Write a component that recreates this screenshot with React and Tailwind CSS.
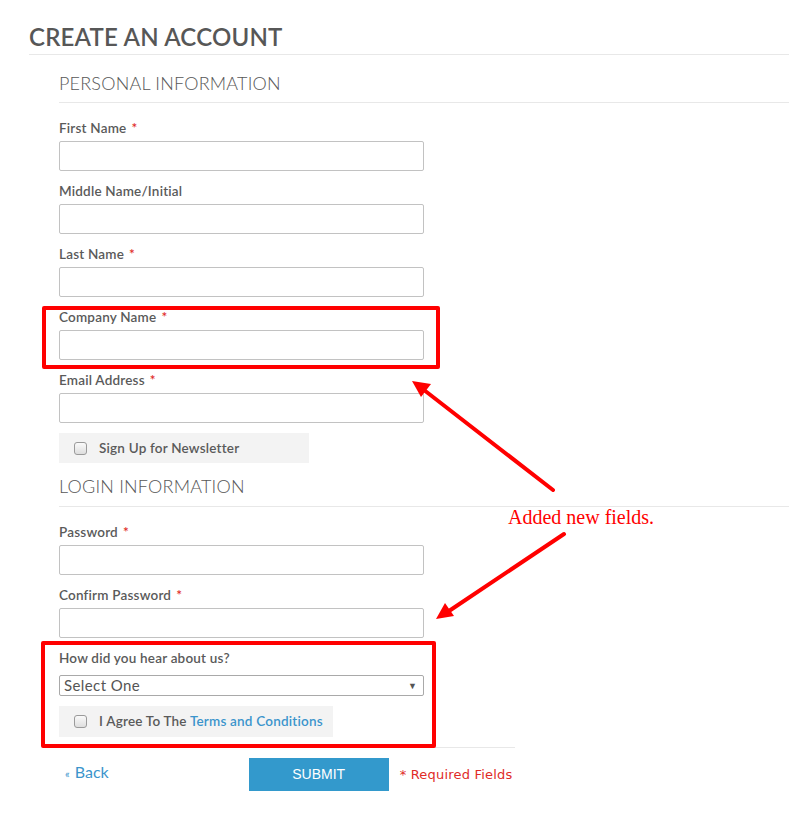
import { Fragment } from 'react'

const personal = [
  { label: 'First Name', required: true },
  { label: 'Middle Name/Initial' },
  { label: 'Last Name', required: true },
  { label: 'Company Name', required: true },
  { label: 'Email Address', required: true },
]

const login = [
  { label: 'Password', required: true },
  { label: 'Confirm Password', required: true },
]

export default function App() {
  return (
    <div className="relative w-[789px] h-[816px] bg-white font-['Lato','Noto_Sans',sans-serif] text-[#575757] overflow-hidden">
      <div className="pl-[29px] pt-[22px]">
        {/* Page title */}
        <h1 className="text-[24px] leading-[30px] font-semibold text-[#575757] pb-[2px] border-b border-[#e8e8e8] tracking-[0.2px]">
          CREATE AN ACCOUNT
        </h1>

        <div className="pl-[30px]">
          {/* Personal information */}
          <SectionTitle className="mt-[16px] pb-[7px]">PERSONAL INFORMATION</SectionTitle>
          <div className="mt-[17px] flex flex-col gap-[12px]">
            {personal.map((f) => (
              <Field key={f.label} {...f} />
            ))}
          </div>
          <CheckRow className="w-[250px] mt-[10px]">Sign Up for Newsletter</CheckRow>

          {/* Login information */}
          <SectionTitle className="mt-[11px] pb-[8px]">LOGIN INFORMATION</SectionTitle>
          <div className="mt-[17px] flex flex-col gap-[12px]">
            {login.map((f) => (
              <Field key={f.label} {...f} />
            ))}
            <div>
              <Label>How did you hear about us?</Label>
              <div className="mt-[9px] w-[365px] h-[21px] border border-[#a9a9a9] rounded-[2px] flex items-center justify-between pl-[4px] pr-[6px]">
                <span className="text-[15px] leading-none text-[#555] tracking-[0.4px]">Select One</span>
                <span className="text-[9px] leading-none text-[#555]">▼</span>
              </div>
            </div>
          </div>
          <CheckRow className="w-[274px] mt-[10px] h-[31px]">
            I Agree To The <span className="text-[#3b95cc]">Terms and Conditions</span>
          </CheckRow>

          {/* Actions */}
          <div className="w-[456px] mt-[10px] border-t border-[#e8e8e8] flex items-start">
            <a className="mt-[14px] ml-[6px] text-[16px] leading-[20px] text-[#3b95cc]">
              <span className="text-[11px] mr-[5px]">«</span>Back
            </a>
            <button className="ml-[140px] mt-[10px] w-[140px] h-[33px] bg-[#3399cc] text-white text-[14px] font-['Liberation_Sans',sans-serif]">
              SUBMIT
            </button>
            <span className="ml-[11px] mt-[18px] text-[13px] leading-[18px] text-[#e02b27] font-['DejaVu_Sans',sans-serif] tracking-[0.2px] whitespace-nowrap">
              * Required Fields
            </span>
          </div>
        </div>
      </div>

      {/* Annotation overlay */}
      <div className="absolute left-[42px] top-[306px] w-[398px] h-[63px] border-[4px] border-[#ff0000] rounded-[2px]" />
      <div className="absolute left-[41px] top-[641px] w-[395px] h-[107px] border-[4px] border-[#ff0000] rounded-[2px]" />
      <svg className="absolute inset-0 pointer-events-none" width="789" height="816" viewBox="0 0 789 816">
        <line x1="553" y1="490" x2="424" y2="390" stroke="#ff0000" strokeWidth="4" strokeLinecap="round" />
        <polygon points="412,381 431,384 421,397" fill="#ff0000" />
        <line x1="564" y1="534" x2="449" y2="611" stroke="#ff0000" strokeWidth="4" strokeLinecap="round" />
        <polygon points="436,619 445,603 454,616" fill="#ff0000" />
      </svg>
      <div className="absolute left-[508px] top-[505px] text-[20px] leading-[24px] text-[#ff0000] font-['Liberation_Serif',serif] whitespace-nowrap">
        Added new fields.
      </div>
    </div>
  )
}

function SectionTitle({ children, className = '' }) {
  return (
    <h2 className={`text-[18px] leading-[24px] font-light text-[#575757] border-b border-[#e8e8e8] tracking-[0.2px] ${className}`}>
      {children}
    </h2>
  )
}

function Label({ children, required }) {
  return (
    <div className="text-[13.5px] leading-[16px] font-semibold text-[#5a5a5a] tracking-[0.2px]">
      {children}
      {required && <span className="text-[#e02b27] ml-[5px]">*</span>}
    </div>
  )
}

function Field({ label, required }) {
  return (
    <div>
      <Label required={required}>{label}</Label>
      <div className="mt-[5px] w-[365px] h-[30px] border border-[#c2c2c2] rounded-[2px] bg-white" />
    </div>
  )
}

function CheckRow({ children, className = '' }) {
  return (
    <div className={`h-[30px] bg-[#f3f3f3] flex items-center pl-[15px] ${className}`}>
      <span className="w-[13px] h-[13px] rounded-[3px] border border-[#9a9a9a] bg-gradient-to-b from-[#fafafa] to-[#dedede]" />
      <span className="ml-[12px] text-[13.5px] font-semibold text-[#5a5a5a] tracking-[0.2px] whitespace-nowrap">{children}</span>
    </div>
  )
}
